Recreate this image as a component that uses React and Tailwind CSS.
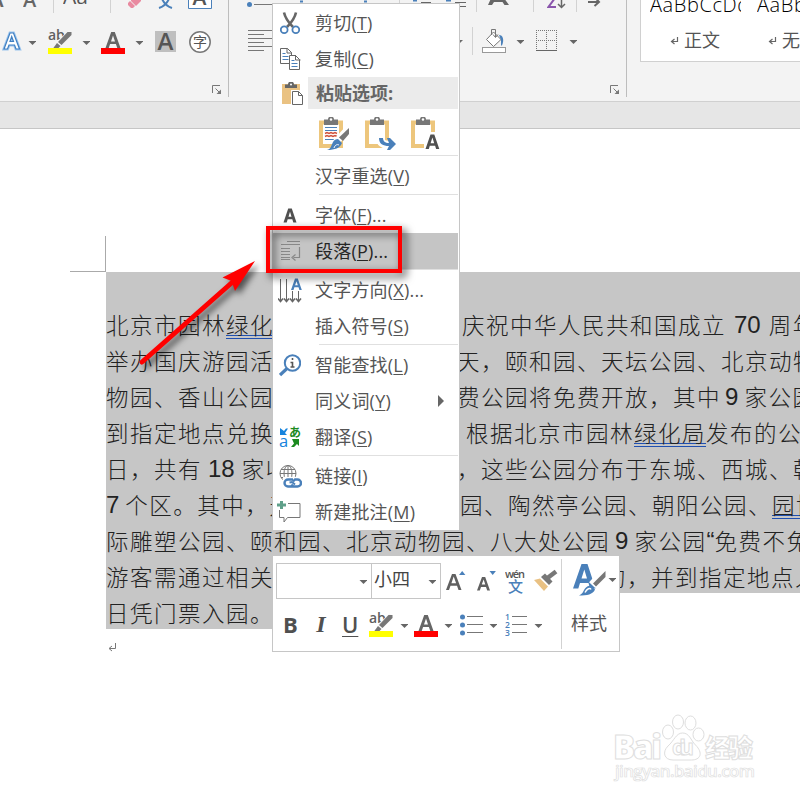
import { clsx } from "clsx";

const UI = "font-['Open_Sans','Noto_Sans_CJK_SC',sans-serif]";

// Small building blocks

function Icon({ w, h, className, children }) {
  return (
    <svg width={w} height={h} viewBox={`0 0 ${w} ${h}`} fill="none" className={clsx("block shrink-0", className)}>
      {children}
    </svg>
  );
}

function Caret({ className }) {
  return (
    <Icon w={8} h={28} className={className}>
      <path d="M0.500 13h8L4.500 17z" fill="#666" />
    </Icon>
  );
}

function Divider({ className }) {
  return <div className={clsx("w-px shrink-0 bg-[#d2d2d2]", className)} />;
}

function Launcher() {
  return (
    <Icon w={10} h={10} className="absolute right-[6px] bottom-[2px]">
      <path d="M0.5 8V0.5H8" stroke="#777" />
      <path d="M3.5 3.5l4 4" stroke="#777" />
      <path d="M9 4.5V9H4.5z" fill="#777" />
    </Icon>
  );
}

function Highlighter({ className }) {
  return (
    <Icon w={24} h={28} className={className}>
      <text x="0" y="12" fontSize="14" fontWeight="600" fill="#606060" className="font-['Open_Sans']">ab</text>
      <path d="M22.500 4.500L10.500 15.500" stroke="#f6f6f6" strokeWidth="5.500" />
      <path d="M23.500 4v3L13.500 17l-3.500-3L19.500 4z" fill="#777" />
      <path d="M9 15l3.500 3-2.500 2.500H5z" fill="#777" />
      <rect x="0" y="20" width="24" height="6" fill="#ff0" />
    </Icon>
  );
}

function FontColor({ className }) {
  return (
    <Icon w={24} h={28} className={className}>
      <path d="M4.500 20L10.200 4h3.600L19.500 20h-3.200l-1.400-4H9.100l-1.400 4zM10 13.500h4L12 7.500z" fill="#666" fillRule="evenodd" />
      <rect x="0" y="20" width="24" height="6" fill="#f00" />
    </Icon>
  );
}

function Bullets({ className }) {
  return (
    <Icon w={23} h={28} className={className}>
      {[6, 14, 22].map((y) => (
        <g key={y}>
          <circle cx="2.500" cy={y} r="2.500" fill="#4a80ba" />
          <path d={`M7 ${y - 0.5}h16`} stroke="#777" />
        </g>
      ))}
    </Icon>
  );
}

function Numbers({ className }) {
  return (
    <Icon w={23} h={28} className={className}>
      {[1, 2, 3].map((n) => (
        <g key={n}>
          <text x="0" y={n * 8 + 1} fontSize="8.500" fontWeight="600" fill="#4a80ba" className="font-['Open_Sans']">{n}</text>
          <path d={`M7 ${n * 8 - 2.5}h15`} stroke="#777" />
        </g>
      ))}
    </Icon>
  );
}

// Ribbon

function FontGroup() {
  return (
    <div className="relative h-[97px] w-[229px] shrink-0 border-r border-[#bdbdbd]">
      <div className="flex h-[13px] overflow-hidden">
        <Icon w={5} h={13}>
          <text x="-11" y="7" fontSize="22" fontWeight="600" fill="#666" className="font-['Open_Sans']">A</text>
        </Icon>
        <Icon w={14} h={13} className="ml-[18px]">
          <text x="0" y="7" fontSize="20" fontWeight="600" fill="#666" className="font-['Open_Sans']">A</text>
        </Icon>
        <Divider className="ml-4 h-[13px]" />
        <Icon w={27} h={13} className="ml-[9px]">
          <text x="0" y="4" fontSize="21" fontWeight="500" fill="#555" className="font-['Open_Sans']">Aa</text>
        </Icon>
        <Divider className="ml-5 h-[13px]" />
        <Icon w={15} h={13} className="ml-[17px]">
          <path d="M0 3l2-2 5 5-2 2H3L0 5z" fill="#e98aa0" />
          <path d="M3 0h10v1L8 6 3 1z" fill="#e98aa0" />
        </Icon>
        <Icon w={16} h={13} className="ml-[15px]">
          <path d="M3 -4C5 3 8 6 14 8M12 -4C10 3 7 6 1 8" stroke="#4a80ba" strokeWidth="2" />
        </Icon>
        <Icon w={24} h={13} className="ml-[14px]">
          <path d="M0.500 -1V8.500h23V-1" stroke="#4a80ba" fill="#fff" />
          <text x="4.500" y="5" fontSize="21" fontWeight="600" fill="#555" className="font-['Open_Sans']">A</text>
        </Icon>
      </div>
      <div className="mt-[15px] flex h-7">
        <Icon w={20} h={28} className="ml-[2px]">
          <path d="M2 21L8 5h3.500l6 16h-3.500l-1.500-4H7l-1.500 4zM8 13.500h3.500L9.700 8.500z" stroke="#9cc5ee" strokeWidth="3" />
          <path d="M2 21L8 5h3.500l6 16h-3.500l-1.500-4H7l-1.500 4zM8 13.500h3.500L9.700 8.500z" stroke="#3f7fc1" strokeWidth="1.200" fill="#fff" fillRule="evenodd" />
        </Icon>
        <Caret className="ml-[6px]" />
        <Highlighter className="ml-3" />
        <Caret className="ml-[10px]" />
        <FontColor className="ml-[11px]" />
        <Caret className="ml-[10px]" />
        <Icon w={21} h={28} className="ml-3">
          <rect x="0" y="3" width="21" height="21" fill="#bfbfbf" />
          <text x="2.500" y="22" fontSize="24" fontWeight="600" fill="#555" className="font-['Open_Sans']">A</text>
        </Icon>
        <Icon w={22} h={28} className="ml-[13px]">
          <circle cx="11" cy="14" r="10.200" stroke="#777" strokeWidth="1.500" fill="#fff" />
          <text x="4" y="19" fontSize="14" fill="#555" className="font-['Noto_Sans_CJK_SC']">字</text>
        </Icon>
      </div>
      <Launcher />
    </div>
  );
}

function ParagraphGroup() {
  return (
    <div className="relative h-[97px] w-[398px] shrink-0 border-r border-[#bdbdbd]">
      <div className="flex h-[13px] overflow-hidden">
        <Icon w={26} h={13} className="ml-[17px]">
          <circle cx="3.500" cy="4.500" r="2.500" fill="#4a80ba" />
          <path d="M8 4.500h18" stroke="#777" />
        </Icon>
        <Icon w={68} h={13} className="ml-[28px]">
          <path d="M0 1.500h3M64 1.500h3" stroke="#4a80ba" strokeWidth="2" />
        </Icon>
        <Divider className="ml-[31px] h-[13px]" />
        <Icon w={54} h={13} className="ml-[13px]">
          <path d="M0 0.500h4M33 0.500h5" stroke="#4a80ba" strokeWidth="2" />
          <path d="M8 2.500h10M42 2.500h11M42 6.500h11" stroke="#666" />
        </Icon>
        <Divider className="ml-[9px] h-3" />
        <Icon w={24} h={13} className="ml-[10px]">
          <path d="M1 5L6 -6h8L22 5h-4.500L15.500 2H7L5 5z" fill="#666" />
        </Icon>
        <Divider className="ml-[22px] h-3" />
        <Icon w={20} h={13} className="ml-[13px]">
          <path d="M8 -2L1.500 7H9" stroke="#8a56ac" strokeWidth="2" />
          <path d="M14.500 -1V7M11 4l3.500 3.500L18 4" stroke="#666" strokeWidth="1.500" />
        </Icon>
        <Divider className="ml-[9px] h-3" />
        <Icon w={13} h={13} className="ml-[11px]">
          <path d="M0 2h10M6.500 -3L11 2 6.500 6" stroke="#666" strokeWidth="2" />
        </Icon>
      </div>
      <div className="mt-[14px] flex h-7">
        <Icon w={26} h={28} className="ml-[19px]">
          <path d="M0 3.500h26M0 7.500h16M0 11.500h26M0 15.500h16M0 19.500h26M0 23.500h16" stroke="#777" />
        </Icon>
        <Icon w={8} h={28} className="ml-[183px]">
          <path d="M0 13h6L3 16z" fill="#6a6a6a" />
        </Icon>
        <Divider className="ml-[7px] h-7" />
        <Icon w={24} h={28} className="ml-[9px]">
          <path d="M11.500 5L19 12.500l-7.500 7L4.500 12.500z" stroke="#777" fill="#fff" />
          <path d="M9.500 8V2.500h4V10" stroke="#777" />
          <path d="M11 7.500l2.500 3 2.500-3" stroke="#777" />
          <path d="M17 8c4 0 5.500 5 3 10.500h-1V13z" fill="#4a80ba" />
          <rect x="0.500" y="20.500" width="23" height="5" fill="#fff" stroke="#999" />
        </Icon>
        <Caret className="ml-[10px]" />
        <Icon w={21} h={28} className="ml-3">
          <path d="M0 3.500h21M0 13.500h21M0.500 3v20M10.500 3v20M20.500 3v20" stroke="#777" strokeDasharray="1 1" />
          <path d="M0 23.500h21" stroke="#666" />
        </Icon>
        <Caret className="ml-3" />
      </div>
      <Launcher />
    </div>
  );
}

function StyleCard({ sample, name, indent }) {
  return (
    <div className="w-[107px] shrink-0">
      <div className="ml-[9px] h-5 w-[91px] overflow-hidden text-[20px] leading-[20px] tracking-[0.6px] whitespace-nowrap text-black font-['Open_Sans'] font-light">
        <span className="block -mt-[5px]">{sample}</span>
      </div>
      <div className={clsx("mt-[5px] flex items-center text-[#555]", indent)}>
        <Icon w={9} h={8} className="mt-1">
          <path d="M7.500 0v4.500H2M4.500 2L1.500 4.500l3 2.500" stroke="#666" strokeWidth="1.200" />
        </Icon>
        <span className="ml-[5px] text-[18px] leading-7 whitespace-nowrap font-['Noto_Sans_CJK_SC',sans-serif]">{name}</span>
      </div>
    </div>
  );
}

function Ribbon() {
  return (
    <header className="flex h-[102px] overflow-hidden border-b border-[#d0d0d0] bg-[#f3f3f3]">
      <FontGroup />
      <ParagraphGroup />
      <div className="ml-[13px] flex h-[62px] w-[400px] shrink-0 border-b border-l border-[#d0d0d0] bg-white">
        <StyleCard sample="AaBbCcDd" name="正文" indent="ml-[29px]" />
        <StyleCard sample="AaBbCcDd" name="无间隔" indent="ml-[20px]" />
      </div>
    </header>
  );
}

// Document text

function Num({ children, margin = "mx-[6px]" }) {
  return <span className={clsx("mt-px text-[24px] tracking-normal font-['Liberation_Sans']", margin)}>{children}</span>;
}

function Mark({ children }) {
  return <span className="h-[34px] shrink-0 border-b-4 border-double border-[#2050b0]">{children}</span>;
}

function Line({ left, right, offset }) {
  return (
    <div className="flex h-9 leading-[38px]">
      <div className="flex w-[351px] shrink-0">{left}</div>
      <div className={clsx("flex shrink-0", offset)}>{right}</div>
    </div>
  );
}

function Document() {
  return (
    <main className="relative h-[671px] overflow-hidden bg-white">
      <div className="flex h-[143px] pl-[70px]">
        <div className="mt-[107px] h-9 w-9 border-r border-b border-[#aaa]" />
      </div>
      <div className="ml-[106px] text-[22.5px] tracking-[1.5px] whitespace-nowrap text-[#222] font-['Noto_Sans_CJK_SC',sans-serif] font-light">
        <div className="h-[321px] w-[694px] overflow-hidden bg-[#c6c6c6] pt-[33px]">
          <Line
            left={<>北京市园林<Mark>绿化局</Mark></>}
            offset="ml-[5px]"
            right={<>庆祝中华人民共和国成立<Num margin="mr-[8px] ml-[8px]">70</Num>周年</>}
          />
          <Line left="举办国庆游园活动" right="天，颐和园、天坛公园、北京动物" />
          <Line left="物园、香山公园" right={<>费公园将免费开放，其中<Num margin="mr-[6px] ml-[4px]">9</Num>家公园</>} />
          <Line left="到指定地点兑换" offset="ml-[9px]" right={<>根据北京市园林<Mark>绿化局</Mark>发布的公</>} />
          <Line left={<>日，共有<Num margin="mr-[7px] ml-[6px]">18</Num>家收</>} right="，这些公园分布于东城、西城、朝" />
          <Line
            left={<><Num margin="mr-[6px]">7</Num>个区。其中，天</>}
            offset="ml-[3px]"
            right={<>园、陶然亭公园、朝阳公园、<Mark>园博</Mark></>}
          />
          <div className="flex h-9 leading-[38px]">
            际雕塑公园、颐和园、北京动物园、八大处公园<Num margin="mr-[6px] ml-[5px]">9</Num>家公园
            <Num margin="mx-0">“</Num>免费不免费”
          </div>
          <Line left="游客需通过相关" offset="ml-[146px]" right="约，并到指定地点入" />
        </div>
        <div className="h-9 w-[180px] bg-[#c6c6c6] leading-[38px]">日凭门票入园。</div>
      </div>
      <Icon w={9} h={9} className="mt-[14px] ml-[108px]">
        <path d="M7.500 0v5.500H1.500M4 3L1 5.500 4 8" stroke="#777" />
      </Icon>
    </main>
  );
}

// Context menu

function MenuItem({ icon, label, hotkey, more, active, submenu }) {
  return (
    <div className={clsx("flex h-9 items-center", active ? "mr-px bg-[#c5c5c5] text-[#262626]" : "text-[#555]")}>
      <div className="flex w-[34px] shrink-0 justify-center">{icon}</div>
      <div className="ml-2 grow text-[18px] leading-9 tracking-[0.2px] whitespace-nowrap">
        {label}(<span className="underline decoration-1 underline-offset-2">{hotkey}</span>){more && "..."}
      </div>
      {submenu && (
        <Icon w={7} h={14} className="mr-[14px]">
          <path d="M0 1l6 6-6 6z" fill="#666" />
        </Icon>
      )}
    </div>
  );
}

function Separator() {
  return <div className="mr-px mb-0.5 ml-[46px] h-px bg-[#e0e0e0]" />;
}

function Clipboard({ children, className }) {
  return (
    <Icon w={32} h={36} className={className}>
      <path d="M2 5.500h20v23.500h-20z" stroke="#edc67c" strokeWidth="4" fill="#fff" />
      <path d="M5 2.500h4a3 3 0 0 1 6 0h4V8H5z" fill="#777" />
      <circle cx="12" cy="2.500" r="1.200" fill="#fff" />
      {children}
    </Icon>
  );
}

function ScissorsIcon() {
  return (
    <Icon w={20} h={24}>
      <path d="M4 1.500C5 6 8 11 13 16M16 1.500C15 6 12 11 7 16" stroke="#666" strokeWidth="2.600" />
      <circle cx="4.200" cy="18.800" r="3.400" stroke="#4a80ba" strokeWidth="1.800" />
      <circle cx="15.800" cy="18.800" r="3.400" stroke="#4a80ba" strokeWidth="1.800" />
    </Icon>
  );
}

function CopyIcon() {
  return (
    <Icon w={21} h={24} className="ml-px">
      <path d="M0.500 1.500h7l4 4v11H0.500z" stroke="#666" fill="#fff" />
      <path d="M7 1v5h5" stroke="#666" />
      <path d="M2.500 6.500h3M2.500 9.500h6M2.500 12.500h6" stroke="#4a80ba" />
      <path d="M9.500 8.500h6l4 4v10H9.500z" stroke="#666" fill="#fff" />
      <path d="M15.500 8v5h5" stroke="#666" />
      <path d="M11.500 13.500h3M11.500 16.500h6M11.500 19.500h6" stroke="#4a80ba" />
    </Icon>
  );
}

function PasteIcon() {
  return (
    <Icon w={23} h={24} className="mt-px ml-[5px]">
      <rect x="0" y="2" width="18" height="20" fill="#eac282" />
      <path d="M3 2.500h3a3 3 0 0 1 6 0h3V6H3z" fill="#666" />
      <circle cx="9" cy="2.500" r="1" fill="#fff" />
      <path d="M10.500 9.500h6l4 4v9h-10z" stroke="#fff" strokeWidth="3" />
      <path d="M10.500 9.500h6l4 4v9h-10z" stroke="#666" fill="#fff" />
      <path d="M16.500 9.500v4h4" stroke="#666" />
    </Icon>
  );
}

function BoldAIcon() {
  return (
    <Icon w={14} h={15}>
      <path d="M0.500 14.500L5.200 0.500h3.600l4.700 14h-3.200L9.300 11.300H4.700L3.700 14.500zM5.500 8.800h3L7 3.800z" fill="#505050" fillRule="evenodd" />
    </Icon>
  );
}

function ParagraphIcon() {
  return (
    <Icon w={20} h={20} className="ml-px">
      <path d="M6 0.500h13M0 3.500h19M0 7.500h9M0 10.500h9M0 13.500h9M0 16.500h9M0 18.500h9" stroke="#888" />
      <path d="M18.500 6v10.500h-6M14.500 13.500l-3.500 3 3.500 3" stroke="#888" strokeWidth="1.200" />
    </Icon>
  );
}

function TextDirectionIcon() {
  return (
    <Icon w={24} h={25}>
      <path d="M2.500 1v21M8.500 1v21M14.500 13v9M20.500 13v9" stroke="#666" />
      <path d="M0 20.500l2.500 3 2.500-3M6 20.500l2.500 3 2.500-3M12 20.500l2.500 3 2.500-3M18 20.500l2.500 3 2.500-3" stroke="#666" strokeWidth="1.600" />
      <path d="M13 12L17 0.500h2.800L23.800 12h-2.400l-.9-2.700h-4.100L15.500 12zM17.100 7.300h2.700L18.500 3.200z" fill="#4a80ba" fillRule="evenodd" />
    </Icon>
  );
}

function LookupIcon() {
  return (
    <Icon w={22} h={24} className="mt-px">
      <circle cx="13.500" cy="9" r="7.700" stroke="#4a80ba" strokeWidth="2" />
      <path d="M8 14.500L1 21" stroke="#4a80ba" strokeWidth="3.200" />
      <path d="M13.500 4v2M11.500 8.500h2v4.500M11.500 13h4" stroke="#555" strokeWidth="1.600" />
    </Icon>
  );
}

function TranslateIcon() {
  return (
    <Icon w={22} h={24}>
      <path d="M1 3v7h7l-2-2 3-4.500H7L5 6z" fill="#1583dd" />
      <text x="0" y="22" fontSize="16.500" fontWeight="500" fill="#1583dd" className="font-['Open_Sans']">a</text>
      <text x="10" y="11.500" fontSize="12" fontWeight="700" fill="#1b8a1f" className="font-['Noto_Sans_CJK_JP']">あ</text>
      <path d="M13 14h7v7l-2-2-3 3h-3l3-3.500z" fill="#1b8a1f" />
    </Icon>
  );
}

function LinkIcon() {
  return (
    <Icon w={23} h={25}>
      <circle cx="9" cy="9.500" r="8" stroke="#777" />
      <ellipse cx="9" cy="9.500" rx="4" ry="8" stroke="#777" />
      <path d="M9 1.500v16M1 9.500h16M2 5.500h14M2 13.500h14" stroke="#777" />
      <rect x="4" y="13" width="19" height="12" fill="#fff" />
      <path d="M14 15.500H9a3.500 3.500 0 0 0 0 7h3l2-2M12 22.500h6.500a3.500 3.500 0 0 0 0-7H16l-2 2" stroke="#4a80ba" strokeWidth="2.400" />
      <path d="M10.500 18.500l2.500-.5 3 2.500" stroke="#4a80ba" strokeWidth="2" />
    </Icon>
  );
}

function CommentIcon() {
  return (
    <Icon w={24} h={24} className="mr-0.5">
      <path d="M11 3.500h12v14H10.500L7 22v-4.500H2.500V10" stroke="#777" />
      <path d="M4.500 1v8M0 5h9" stroke="#5fa08a" strokeWidth="3" />
    </Icon>
  );
}

function ContextMenu() {
  return (
    <nav className={clsx("absolute top-[3px] left-[272px] h-[528px] w-[188px] border border-[#c6c6c6] bg-white pt-px", UI)}>
      <MenuItem icon={<ScissorsIcon />} label="剪切" hotkey="T" />
      <MenuItem icon={<CopyIcon />} label="复制" hotkey="C" />
      <div className="flex h-8 items-center">
        <div className="flex w-[35px] justify-center">
          <PasteIcon />
        </div>
        <div className="mr-px h-8 grow bg-[#ebebeb] pl-2 text-[18px] leading-8 font-bold text-[#666]">粘贴选项:</div>
      </div>
      <div className="flex h-[46px] pt-[8px] pl-[46px]">
        <Clipboard>
          <path d="M6 10.500h12M6 13.500h12M6 22.500h12" stroke="#4a80ba" />
          <path d="M6 16.500l2-1 2 1 2-1 2 1 2-1 2 1M6 19.500l2-1 2 1 2-1 2 1 2-1 2 1" stroke="#d0523c" strokeWidth="1.500" />
          <path d="M29 12L17 25" stroke="#fff" strokeWidth="7" />
          <path d="M30 11v6l-6 7-4-3.500z" fill="#777" />
          <path d="M19 22l4 4c-2 5-7 7-15 7 4-1 4-4 6-8 1-2 3-3 5-3z" fill="#4a80ba" />
          <path d="M15 31c1-3 3-4 5-3" stroke="#fff" />
        </Clipboard>
        <Clipboard className="ml-[14px]">
          <path d="M14 21c2 7 7 7 14 7" stroke="#fff" strokeWidth="8" />
          <path d="M14 21h4c0 3 2 5 6 5l-2-5h3l6 6-6 6h-3l2-4c-6 0-10-2-10-8z" fill="#4a80ba" />
        </Clipboard>
        <Clipboard className="ml-[14px]">
          <path d="M13 35V23l5-8h7v20z" fill="#fff" />
          <path d="M14.500 32L19.500 17.500h3.800l5 14.500h-3.200l-1-3.200h-5.300l-1 3.200zM19.600 26.200h3.600l-1.800-5.600z" fill="#505050" fillRule="evenodd" />
        </Clipboard>
      </div>
      <Separator />
      <MenuItem label="汉字重选" hotkey="V" />
      <Separator />
      <MenuItem icon={<BoldAIcon />} label="字体" hotkey="F" more />
      <MenuItem icon={<ParagraphIcon />} label="段落" hotkey="P" more active />
      <Separator />
      <MenuItem icon={<TextDirectionIcon />} label="文字方向" hotkey="X" more />
      <MenuItem label="插入符号" hotkey="S" />
      <Separator />
      <MenuItem icon={<LookupIcon />} label="智能查找" hotkey="L" />
      <MenuItem label="同义词" hotkey="Y" submenu />
      <MenuItem icon={<TranslateIcon />} label="翻译" hotkey="S" />
      <Separator />
      <MenuItem icon={<LinkIcon />} label="链接" hotkey="I" />
      <MenuItem icon={<CommentIcon />} label="新建批注" hotkey="M" />
    </nav>
  );
}

// Floating format toolbar

function MiniToolbar() {
  return (
    <div className={clsx("absolute top-[556px] left-[272px] flex h-24 w-[348px] border border-t-0 border-[#c6c6c6] bg-white", UI)}>
      <div className="w-[288px] shrink-0">
        <div className="flex h-[43px] pt-[7px] pl-[3px]">
          <div className="flex h-9 w-[96px] shrink-0 items-center justify-end border border-[#c6c6c6] pr-1">
            <Caret />
          </div>
          <div className="-ml-px flex h-9 w-[70px] shrink-0 items-center justify-between border border-[#c6c6c6] pr-1 pl-[2px] text-[18px] leading-[30px] text-[#444]">
            <span className="-mt-[5px]">小四</span>
            <Caret />
          </div>
          <Icon w={22} h={30} className="ml-[5px]">
            <path d="M0 27L6 11h3.500l6 16h-3l-1.500-4.200H4.500L3 27zM5.400 20.200h4.700L7.700 13.600z" fill="#606060" fillRule="evenodd" />
            <path d="M13 12l3.200-4 3.200 4z" fill="#4a80ba" />
          </Icon>
          <Icon w={20} h={30} className="ml-[9px]">
            <path d="M0 27.500L5 14h3.200L13 27.500h-2.800L9 24H4L2.800 27.500zM4.800 21.500h3.500L6.600 16.500z" fill="#606060" fillRule="evenodd" />
            <path d="M12.500 8h6.400l-3.200 4z" fill="#4a80ba" />
          </Icon>
          <Icon w={22} h={32} className="ml-[8px]">
            <text x="0" y="14.500" fontSize="11" fontWeight="600" fill="#555" textLength="20" className="font-['Open_Sans']">wén</text>
            <text x="3" y="29" fontSize="15" fontWeight="500" fill="#4a80ba" className="font-['Noto_Sans_CJK_SC']">文</text>
          </Icon>
          <Icon w={24} h={30} className="ml-[7px]">
            <path d="M0 17l6-1.500 8 8-4 4.500z" fill="#e9c183" />
            <path d="M7 14l4-3.500 7.500 8L15 22z" fill="#777" />
            <path d="M13.500 15L22 8.500" stroke="#777" strokeWidth="4.500" />
          </Icon>
        </div>
        <div className="mt-[12px] flex h-7 pl-[10px] text-[22px] leading-[26px] text-[#505050]">
          <span className="w-[18px] shrink-0 font-bold">B</span>
          <span className="ml-[13px] w-[14px] shrink-0 text-center font-['Liberation_Serif'] text-[24px] font-bold italic">I</span>
          <span className="ml-[14px] w-[17px] shrink-0 font-semibold underline decoration-1 underline-offset-[3px]">U</span>
          <Highlighter className="ml-[10px]" />
          <Caret className="ml-[7px]" />
          <FontColor className="ml-[6px]" />
          <Caret className="ml-[6px]" />
          <Bullets className="ml-[8px]" />
          <Caret className="ml-[6px]" />
          <Numbers className="ml-[8px]" />
          <Caret className="ml-[6px]" />
        </div>
      </div>
      <Divider className="mt-[3px] h-[90px]" />
      <div className="w-[58px] shrink-0 pt-[7px] pl-[11px]">
        <div className="flex">
          <Icon w={34} h={36}>
            <path d="M0 25.500L8.500 1H14.500L22.500 25.500H17L15.500 20H7L5.300 25.500zM8.500 15.500h5.500L11.300 6.500z" fill="#4a80ba" fillRule="evenodd" />
            <path d="M31 9L19 22" stroke="#fff" strokeWidth="8" />
            <path d="M32.500 8v6L23 23.500l-3-3z" fill="#777" />
            <path d="M18 22.500l4 4c-2 5-8 6-16 6 4-2 4-4 6-7 1.500-2 3.500-3 6-3z" fill="#4a80ba" />
            <path d="M12 29.500c2-4 5-5 6-3" stroke="#fff" strokeWidth="1.500" />
          </Icon>
          <Caret className="mt-[2px] ml-px" />
        </div>
        <div className="-ml-[2px] mt-[9px] text-[18px] leading-[30px] whitespace-nowrap text-[#555]">样式</div>
      </div>
    </div>
  );
}

// Callout drawn over the menu

function Callout() {
  return (
    <>
      <div className="absolute top-[226px] left-[266px] h-[47px] w-[136px] border-4 border-[#f00] drop-shadow-[4px_4px_4px_rgba(0,0,0,0.75)]" />
      <Icon w={140} h={125} className="absolute top-[250px] left-[130px] overflow-visible drop-shadow-[4px_4px_3px_rgba(0,0,0,0.6)]">
        <path d="M12 112L106 29" stroke="#f00" strokeWidth="5" strokeLinecap="round" />
        <path d="M125 11L92.500 27.500l9 3.500 3.500 10z" fill="#f00" />
      </Icon>
    </>
  );
}

function Watermark() {
  return (
    <Icon w={160} h={80} className="absolute top-[706px] left-[607px]">
      <g stroke="#dedede" fill="#fff" strokeWidth="1">
        <ellipse cx="61" cy="26" rx="5.500" ry="7" />
        <ellipse cx="71" cy="16" rx="5.500" ry="7" />
        <ellipse cx="83.500" cy="17" rx="5.500" ry="7" />
        <ellipse cx="91.500" cy="28.500" rx="5.500" ry="6.500" />
        <path d="M75.500 27c7 0 8 7 13 12 8 8 5 15-4 15H66c-9 0-11-8-5-14 6-5 8-13 14.500-13z" />
        <text x="6" y="53" fontSize="33" fontWeight="800" textLength="49" className="font-['Open_Sans']">Bai</text>
        <text x="65" y="49" fontSize="22" fontWeight="700" textLength="22" className="font-['Open_Sans']">du</text>
        <text x="98" y="51" fontSize="25" fontWeight="900" textLength="48" className="font-['Noto_Sans_CJK_SC']">经验</text>
        <text x="8" y="71" fontSize="17" fontWeight="600" strokeWidth="0.700" textLength="140" className="font-['Open_Sans']">jingyan.baidu.com</text>
      </g>
    </Icon>
  );
}

export default function App() {
  return (
    <div className="relative h-[800px] w-[800px] overflow-hidden bg-white">
      <Ribbon />
      <div className="h-[27px] border-b border-[#c6c6c6] bg-[#e6e6e6]" />
      <Document />
      <Watermark />
      <ContextMenu />
      <MiniToolbar />
      <Callout />
    </div>
  );
}
